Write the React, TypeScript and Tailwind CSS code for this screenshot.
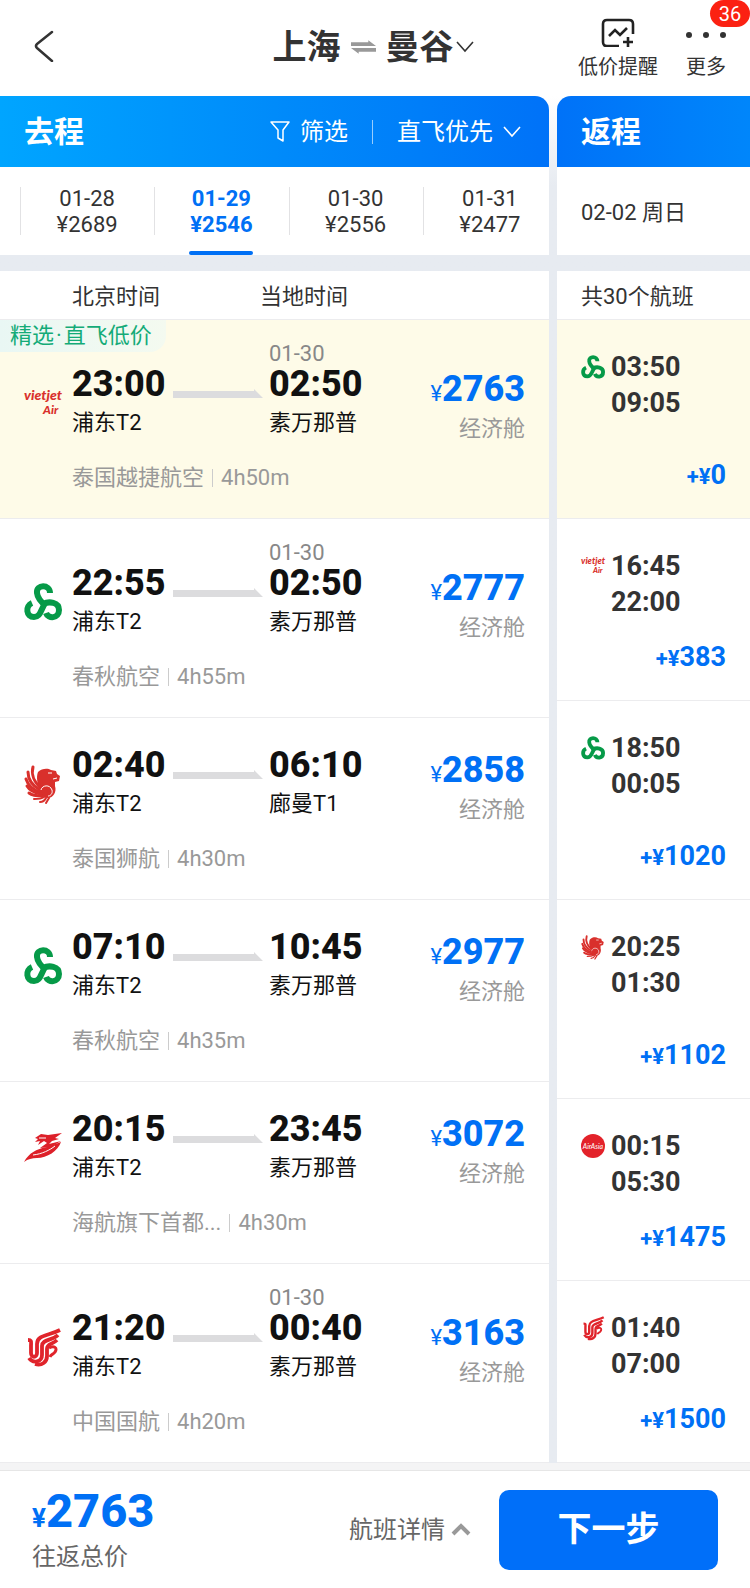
import type { ReactNode } from "react";

type Carrier = "vietjet" | "spring" | "lion" | "capital" | "airchina" | "airasia";

const dates = [
  { day: "01-28", price: "¥2689" },
  { day: "01-29", price: "¥2546", active: true },
  { day: "01-30", price: "¥2556" },
  { day: "01-31", price: "¥2477" },
];

const outbound: {
  carrier: Carrier;
  airline: string;
  duration: string;
  dep: string;
  arr: string;
  arrDate?: string;
  arrPort: string;
  price: string;
  tag?: string[];
}[] = [
  { carrier: "vietjet", airline: "泰国越捷航空", duration: "4h50m", dep: "23:00", arr: "02:50", arrDate: "01-30", arrPort: "素万那普", price: "2763", tag: ["精选", "直飞低价"] },
  { carrier: "spring", airline: "春秋航空", duration: "4h55m", dep: "22:55", arr: "02:50", arrDate: "01-30", arrPort: "素万那普", price: "2777" },
  { carrier: "lion", airline: "泰国狮航", duration: "4h30m", dep: "02:40", arr: "06:10", arrPort: "廊曼T1", price: "2858" },
  { carrier: "spring", airline: "春秋航空", duration: "4h35m", dep: "07:10", arr: "10:45", arrPort: "素万那普", price: "2977" },
  { carrier: "capital", airline: "海航旗下首都...", duration: "4h30m", dep: "20:15", arr: "23:45", arrPort: "素万那普", price: "3072" },
  { carrier: "airchina", airline: "中国国航", duration: "4h20m", dep: "21:20", arr: "00:40", arrDate: "01-30", arrPort: "素万那普", price: "3163" },
];

const inbound: { carrier: Carrier; dep: string; arr: string; extra: string; tall?: boolean }[] = [
  { carrier: "spring", dep: "03:50", arr: "09:05", extra: "0", tall: true },
  { carrier: "vietjet", dep: "16:45", arr: "22:00", extra: "383" },
  { carrier: "spring", dep: "18:50", arr: "00:05", extra: "1020", tall: true },
  { carrier: "lion", dep: "20:25", arr: "01:30", extra: "1102", tall: true },
  { carrier: "airasia", dep: "00:15", arr: "05:30", extra: "1475" },
  { carrier: "airchina", dep: "01:40", arr: "07:00", extra: "1500" },
];

const marks: Record<Carrier, ReactNode> = {
  vietjet: (
    <g fill="#d9302c" fontFamily="Lato, sans-serif" fontStyle="italic" fontWeight="900">
      <text x="0" y="16" fontSize="14">vietjet</text>
      <text x="19" y="30" fontSize="12">Air</text>
    </g>
  ),
  spring: (
    <g fill="none" stroke="#069a48" strokeWidth="6">
      <path d="M26 10C26 1 12 1 13 10C13.500 15 17 19 22 23" />
      <path d="M19 21C25 18 35 19 35 27C35 36 24 36 22 30" />
      <path d="M8 20C1 23 2 34 10 34C17 34 16 27 22 19" />
    </g>
  ),
  lion: (
    <>
      <path fill="#d9302c" d="M14 7C18 3 24 3 27 5L32 6L33 9L36 11L35 16L31 17L31 21C33 27 29 33 24 33C18 33 16 29 17 24C13 20 12 12 14 7Z" />
      <g fill="none" stroke="#d9302c" strokeWidth="3" strokeLinecap="round">
        <path d="M9 2C7 9 10 17 17 23" />
        <path d="M4 7C4 15 9 21 16 25" />
        <path d="M2 14C4 20 9 25 16 27" />
        <path d="M3 21C6 26 11 28 17 29" />
        <path d="M5 28C9 31 13 31 18 31" />
      </g>
      <g fill="none" stroke="#d9302c" strokeWidth="2" strokeLinecap="round">
        <path d="M10 34C14 34 17 34 20 32" />
        <path d="M16 37C19 37 21 35 22 33" />
        <path d="M22 38L25 33" />
      </g>
      <g fill="none" stroke="#fff" strokeWidth="1">
        <path d="M17 25C18 20 26 19 28 25C29 29 26 31 24 31" />
        <path d="M24 8L28 8M29 14L33 13" />
      </g>
    </>
  ),
  capital: (
    <g fill="#dd2029">
      <path d="M0 33C5 24 12 20 23 18L37 13C34 22 23 29 13 29C8 29 4 30 0 33Z" />
      <path d="M11 9L17 5L24 6L38 4L31 9L35 10L28 12L25 15L37 12L27 18L16 19L23 14L20 12L14 16L16 12L11 13L14 10Z" />
      <path d="M9 26C18 25 26 21 31 17" fill="none" stroke="#fff" strokeWidth="1" />
      <path d="M15 9L22 9" fill="none" stroke="#fff" strokeWidth="1" />
    </g>
  ),
  airchina: (
    <g fill="none" stroke="#e0242b" strokeWidth="3.800">
      <path d="M4 12C8 12 7 14 7 18V25C7 30 13 30 13 25V16C13 7 24 8 36 2" />
      <path d="M5 30C9 36 18 34 18 27V18C18 11 28 13 34 7" />
      <path d="M11 36C18 38 23 34 23 28V21C23 15 28 17 33 12" />
      <path d="M25 20C30 17 34 20 31 24C29 27 27 26 26 29" strokeWidth="3" />
    </g>
  ),
  airasia: (
    <>
      <circle cx="19" cy="19" r="19" fill="#e3222a" />
      <text x="19" y="23" textAnchor="middle" fill="#fff" fontFamily="Lato, sans-serif" fontStyle="italic" fontWeight="400" fontSize="11">AirAsia</text>
    </>
  ),
};

function Logo({ carrier, className }: { carrier: Carrier; className: string }) {
  return (
    <svg viewBox="0 0 38 38" className={`shrink-0 overflow-visible ${className}`} aria-hidden="true">
      {marks[carrier]}
    </svg>
  );
}

function ChevronDown({ className }: { className: string }) {
  return (
    <svg viewBox="0 0 18 12" className={className} fill="none" stroke="currentColor" strokeWidth="1.600" aria-hidden="true">
      <path d="M1 1L9 10L17 1" />
    </svg>
  );
}

function Header() {
  return (
    <header className="relative flex h-24 items-center justify-center bg-white text-[#333]">
      <button aria-label="返回" className="absolute left-8 top-7 p-0.5">
        <svg viewBox="0 0 20 32" className="h-8 w-5" fill="none" stroke="currentColor" strokeWidth="2.500" strokeLinecap="round" strokeLinejoin="round">
          <path d="M18 2L3 14Q1 16 3 18L18 31" />
        </svg>
      </button>
      <button className="flex items-center pb-0.5 pr-1 text-[34px] font-bold leading-[40px]">
        上海
        <svg viewBox="0 0 26 14" className="mx-2.5 h-3.5 w-[25px]" fill="#999" aria-hidden="true">
          <path d="M0 2H18V0L26 6H0ZM26 12H8V14L0 8H26Z" />
        </svg>
        曼谷
        <ChevronDown className="ml-0.5 h-3 w-[18px]" />
      </button>
      <div className="absolute right-6 top-[17px] flex gap-7 text-xl leading-7">
        <button className="flex flex-col items-center gap-1.5">
          <svg viewBox="0 0 34 30" className="h-[30px] w-[34px]" fill="none" stroke="#222" strokeWidth="2.600" aria-hidden="true">
            <path d="M18 29H6Q2 29 2 25V7Q2 3 6 3H28Q32 3 32 7V17" />
            <path d="M8 19L14 13L19 18L26 11M27 20V30M22 25H32" />
          </svg>
          低价提醒
        </button>
        <button className="flex flex-col items-center gap-1.5">
          <svg viewBox="0 0 40 30" className="h-[30px] w-10" fill="#333" aria-hidden="true">
            <circle cx="3" cy="18" r="3" />
            <circle cx="20" cy="18" r="3" />
            <circle cx="37" cy="18" r="3" />
          </svg>
          更多
        </button>
      </div>
      <span className="absolute right-0 top-0 flex h-[27px] w-10 items-center justify-center rounded-full bg-[#fb2112] text-xl text-white">36</span>
    </header>
  );
}

function OutboundRow({ flight, selected }: { flight: (typeof outbound)[number]; selected: boolean }) {
  return (
    <li className={`relative border-b border-[#ececee] px-6 pb-[25px] ${selected ? "bg-[#fefbe8]" : "bg-white"} ${flight.arrDate ? "pt-6" : "pt-[27px]"}`}>
      {flight.tag && (
        <span className="absolute left-0 top-0 flex rounded-br-2xl bg-gradient-to-r from-[#e9f7f4] to-[#f4faf0] pl-2.5 pr-3.5 text-[22px] leading-[32px] text-[#14ab78]">
          {flight.tag[0]}
          <span className="px-0.5">·</span>
          {flight.tag[1]}
        </span>
      )}
      <div className="flex items-end">
        <Logo carrier={flight.carrier} className="mb-[26px] mr-2.5 h-[38px] w-[38px]" />
        <div className="w-[101px] pb-[6px]">
          <p className="text-[36px] font-extrabold leading-[40px]">{flight.dep}</p>
          <p className="text-[22px] leading-[38px]">浦东T2</p>
        </div>
        <svg viewBox="0 0 90 10" className="mb-[49px] mr-1.5 h-2.5 w-[90px]" fill="#dcdcde" aria-hidden="true">
          <path d="M0 2H81V0L90 9H0Z" />
        </svg>
        <div className="pb-[6px]">
          {flight.arrDate && <p className="h-[20px] text-[22px] leading-[20px] text-[#888]">{flight.arrDate}</p>}
          <p className="text-[36px] font-extrabold leading-[40px]">{flight.arr}</p>
          <p className="text-[22px] leading-[38px]">{flight.arrPort}</p>
        </div>
        <div className="ml-auto text-right">
          <p className="text-[36px] font-extrabold leading-[32px] text-[#0070f5]">
            <span className="text-[22px] font-normal">¥</span>
            {flight.price}
          </p>
          <p className="text-[22px] leading-[38px] text-[#999]">经济舱</p>
        </div>
      </div>
      <p className="ml-12 mt-[15px] flex items-center text-[22px] leading-[30px] text-[#999]">
        {flight.airline}
        <span className="mx-2 h-[18px] w-px bg-[#ccc]" />
        {flight.duration}
      </p>
    </li>
  );
}

function InboundRow({ flight, selected }: { flight: (typeof inbound)[number]; selected: boolean }) {
  return (
    <li className={`flex flex-col justify-between border-b border-[#ececee] px-6 pb-[25px] pt-[29px] ${selected ? "bg-[#fefbe8]" : "bg-white"} ${flight.tall ? "min-h-[199px]" : "min-h-[182px]"}`}>
      <div className="flex gap-1.5 text-[27px] font-bold leading-[36px] text-[#333]">
        <Logo carrier={flight.carrier} className="mt-1.5 h-6 w-6" />
        <div>
          <p>{flight.dep}</p>
          <p>{flight.arr}</p>
        </div>
      </div>
      <p className="text-right text-[27px] font-bold leading-[32px] text-[#0070f5]">
        <span className="text-[22px]">+¥</span>
        {flight.extra}
      </p>
    </li>
  );
}

export default function App() {
  return (
    <div className="bg-white font-['Roboto','Noto_Sans_CJK_SC',sans-serif] text-[#111]">
      <Header />

      <main className="flex bg-gradient-to-b from-white to-[#e7ebf1] to-[90px]">
        <section className="min-w-0 flex-1">
          <div className="flex h-[71px] items-center rounded-tr-[14px] bg-gradient-to-r from-[#00a5ff] via-[#008bfa] to-[#0072f8] pl-6 pr-7 text-2xl text-white">
            <h2 className="text-[30px] font-bold">去程</h2>
            <button className="ml-auto flex items-center gap-2.5">
              <svg viewBox="0 0 20 21" className="h-[21px] w-5" fill="none" stroke="currentColor" strokeWidth="1.500" strokeLinejoin="round" aria-hidden="true">
                <path d="M1 1H19L13 9V20L8 17V9Z" />
              </svg>
              筛选
            </button>
            <span className="mx-6 h-6 w-px bg-white/60" />
            <button className="flex items-center gap-2.5">
              直飞优先
              <ChevronDown className="h-3 w-[18px]" />
            </button>
          </div>

          <div className="overflow-hidden bg-white">
            <div className="-mr-2 ml-5 grid h-[88px] grid-cols-4">
              {dates.map((d) => (
                <button key={d.day} className={`relative flex flex-col items-center pt-[19px] text-[22px] leading-[26px] ${d.active ? "font-bold text-[#0070f5]" : "text-[#333]"}`}>
                  <span className="absolute left-0 top-5 h-12 w-px bg-[#e2e2e4]" />
                  <span>{d.day}</span>
                  <span>{d.price}</span>
                  {d.active && <span className="mt-auto h-1 w-16 rounded-full bg-[#0070f5]" />}
                </button>
              ))}
            </div>
          </div>

          <div className="mt-4 flex h-[49px] items-center border-b border-[#ececee] bg-white pl-[72px] pt-0.5 text-[22px] text-[#333]">
            <span className="w-[188px]">北京时间</span>
            <span>当地时间</span>
          </div>
          <ul>
            {outbound.map((f, i) => (
              <OutboundRow key={f.dep} flight={f} selected={i === 0} />
            ))}
          </ul>
        </section>

        <section className="ml-2 w-[193px] shrink-0">
          <div className="flex h-[71px] items-center rounded-tl-[14px] bg-gradient-to-r from-[#0072f8] to-[#0086fb] px-6 text-white">
            <h2 className="text-[30px] font-bold">返程</h2>
          </div>
          <p className="flex h-[88px] items-center bg-white px-6 pt-0.5 text-[22px] text-[#333]">02-02 周日</p>
          <p className="mt-4 flex h-[49px] items-center border-b border-[#ececee] bg-white px-6 pt-0.5 text-[22px] text-[#333]">共30个航班</p>
          <ul>
            {inbound.map((f, i) => (
              <InboundRow key={f.dep} flight={f} selected={i === 0} />
            ))}
          </ul>
        </section>
      </main>

      <footer className="border-t-[7px] border-[#f4f4f5]">
        <div className="flex h-[118px] items-center border-t border-[#e6e6e6] px-8">
          <div className="pt-1.5">
            <p className="text-[47px] font-extrabold leading-[42px] text-[#0070f5]">
              <span className="text-[26px] font-bold">¥</span>
              2763
            </p>
            <p className="text-2xl leading-9 text-[#666]">往返总价</p>
          </div>
          <button className="ml-auto flex items-center gap-1.5 text-2xl text-[#666]">
            航班详情
            <svg viewBox="0 0 20 13" className="h-[13px] w-5" fill="none" stroke="#999" strokeWidth="4" aria-hidden="true">
              <path d="M2 11L10 3L18 11" />
            </svg>
          </button>
          <button className="ml-7 h-20 w-[219px] rounded-[10px] bg-[#006ff9] text-[34px] font-bold text-white">下一步</button>
        </div>
      </footer>
    </div>
  );
}
